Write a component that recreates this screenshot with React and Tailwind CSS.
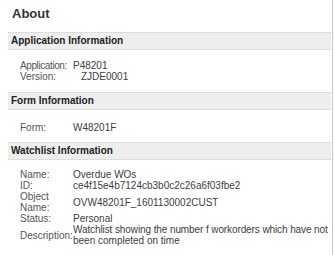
import React from 'react';

const font = { fontFamily: '"Liberation Sans", Arial, sans-serif' };

function SectionBar({ title, className = '' }) {
  return (
    <div
      className={`ml-2 mr-px h-[18px] border-y border-[#dcdcdc] bg-[#eeeeee] pl-[3px] text-[10px] font-bold leading-[16px] text-[#222222] ${className}`}
    >
      {title}
    </div>
  );
}

function InfoRow({ label, children, labelClass = '', valueClass = '' }) {
  return (
    <div className="flex items-center">
      <div className={`w-[53px] shrink-0 text-[#555555] ${labelClass}`}>{label}</div>
      <div className={`text-[#404040] ${valueClass}`}>{children}</div>
    </div>
  );
}

export default function App() {
  return (
    <div
      className="h-[255px] w-[333px] overflow-hidden border-r border-[#c8c8c8] bg-white"
      style={font}
    >
      <h1 className="pl-3 pt-[6px] text-[13px] font-bold leading-[16px] text-[#333333]">About</h1>

      {/* Application */}
      <SectionBar title="Application Information" className="mt-[10px]" />
      <div className="pl-5 pt-[10px] text-[10px] leading-[11px]">
        <InfoRow label="Application:" labelClass="tracking-[-0.4px]">P48201</InfoRow>
        <InfoRow label="Version:" valueClass="pl-2">ZJDE0001</InfoRow>
      </div>

      {/* Form */}
      <SectionBar title="Form Information" className="mt-[10px]" />
      <div className="pl-5 pt-[12px] text-[10px] leading-[11px]">
        <InfoRow label="Form:">W48201F</InfoRow>
      </div>

      {/* Watchlist */}
      <SectionBar title="Watchlist Information" className="mt-[9px]" />
      <div className="pl-5 pt-[9px] text-[10px] leading-[11px]">
        <InfoRow label="Name:">Overdue WOs</InfoRow>
        <InfoRow label="ID:">ce4f15e4b7124cb3b0c2c26a6f03fbe2</InfoRow>
        <InfoRow
          label={
            <>
              Object
              <br />
              Name:
            </>
          }
        >
          OVW48201F_1601130002CUST
        </InfoRow>
        <InfoRow label="Status:">Personal</InfoRow>
        <InfoRow label="Description:">
          <span className="whitespace-nowrap tracking-[-0.1px]">
            Watchlist showing the number f workorders which have not
          </span>
          <br />
          been completed on time
        </InfoRow>
      </div>
    </div>
  );
}
